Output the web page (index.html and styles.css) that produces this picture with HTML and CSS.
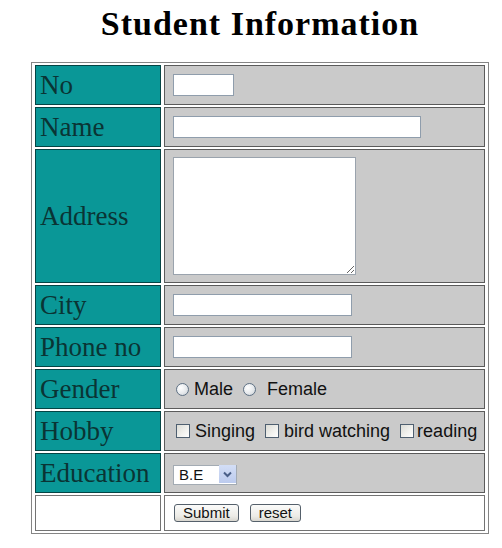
FILE: index.html
```html
<!DOCTYPE html>
<html>
<head>
<meta charset="utf-8">
<title>Student Information</title>
<link rel="stylesheet" href="styles.css">
</head>
<body>
<div class="page">
  <h1 class="title">Student Information</h1>
  <form class="form">
    <table class="info">
      <tr>
        <td class="label">No</td>
        <td class="field"><input class="txt txt-no" type="text"></td>
      </tr>
      <tr>
        <td class="label">Name</td>
        <td class="field"><input class="txt txt-name" type="text"></td>
      </tr>
      <tr class="row-address">
        <td class="label">Address</td>
        <td class="field field-address"><textarea class="area"></textarea></td>
      </tr>
      <tr>
        <td class="label">City</td>
        <td class="field"><input class="txt txt-mid" type="text"></td>
      </tr>
      <tr>
        <td class="label">Phone no</td>
        <td class="field"><input class="txt txt-mid" type="text"></td>
      </tr>
      <tr>
        <td class="label">Gender</td>
        <td class="field">
          <div class="opts">
            <input class="radio" type="radio" name="g"><span class="opt-text">Male</span>
            <input class="radio radio-2" type="radio" name="g"><span class="opt-text opt-spaced">Female</span>
          </div>
        </td>
      </tr>
      <tr>
        <td class="label">Hobby</td>
        <td class="field">
          <div class="opts">
            <input class="check" type="checkbox"><span class="opt-text">Singing</span>
            <input class="check check-n" type="checkbox"><span class="opt-text">bird watching</span>
            <input class="check check-n check-last" type="checkbox"><span class="opt-text opt-last">reading</span>
          </div>
        </td>
      </tr>
      <tr>
        <td class="label">Education</td>
        <td class="field">
          <span class="sel-wrap">
            <select class="sel"><option>B.E</option><option>B.Tech</option><option>M.E</option></select>
            <span class="sel-btn"><svg width="17" height="18" viewBox="0 0 17 18"><path d="M5 7.5 L8.5 11 L12 7.5" fill="none" stroke="#4a5f88" stroke-width="2"/></svg></span>
          </span>
        </td>
      </tr>
      <tr class="row-actions">
        <td class="blank"></td>
        <td class="blank actions">
          <button class="btn" type="submit">Submit</button><button class="btn btn-reset" type="reset">reset</button>
        </td>
      </tr>
    </table>
  </form>
</div>
</body>
</html>
```

FILE: styles.css
```css
html, body {
  margin: 0;
  padding: 0;
  background: #ffffff;
}

.page {
  width: 458px;
  margin-left: 31px;
}

.title {
  margin: 4px 0 0 0;
  height: 58px;
  text-align: center;
  font-family: "Liberation Serif", "Times New Roman", serif;
  font-weight: bold;
  font-size: 34px;
  letter-spacing: 1px;
  line-height: 40px;
  color: #000;
}

.form {
  margin: 0;
}

.info {
  width: 458px;
  table-layout: fixed;
  border-collapse: separate;
  border-spacing: 3px 2px;
  border: 1px solid #858585;
}

.info td {
  box-sizing: border-box;
  height: 40px;
  border: 1px solid rgba(0, 0, 0, 0.55);
  vertical-align: middle;
}

.label {
  width: 126px;
  background: #0a9797;
  color: #0a3434;
  font-family: "Liberation Serif", "Times New Roman", serif;
  font-size: 27px;
  padding: 0 0 0 4px;
  white-space: nowrap;
}

.field {
  width: 321px;
  background: #cacaca;
  padding: 0 0 0 8px;
  font-family: "Liberation Sans", Arial, sans-serif;
  font-size: 18px;
  color: #111;
}

.row-address td {
  height: 134px;
}

.txt {
  display: block;
  box-sizing: border-box;
  height: 22px;
  margin: 0;
  padding: 0 3px;
  border: 1px solid #8f9dac;
  background: #fff;
  font-family: "Liberation Sans", Arial, sans-serif;
  font-size: 14px;
  outline: none;
}

.txt-no { width: 61px; }
.txt-name { width: 248px; }
.txt-mid { width: 179px; }

.area {
  display: block;
  box-sizing: border-box;
  width: 183px;
  height: 118px;
  margin: 0;
  padding: 2px;
  border: 1px solid #9aa3ad;
  background: #fff;
  resize: both;
  outline: none;
}

.opts {
  display: flex;
  align-items: center;
  white-space: nowrap;
  line-height: 22px;
}

.radio,
.check {
  appearance: none;
  -webkit-appearance: none;
  box-sizing: border-box;
  width: 13px;
  height: 13px;
  margin: 0 5px 0 3px;
  flex: none;
}

.radio {
  border-radius: 50%;
  border: 1px solid #5f7184;
  background: radial-gradient(circle at 35% 35%, #ffffff 0%, #e6e9ec 55%, #c3c9cf 100%);
}

.check {
  width: 14px;
  height: 14px;
  border: 1px solid #4e5f70;
  background: linear-gradient(135deg, #dcdcd6 0%, #f2f2ef 60%, #ffffff 100%);
}

.radio-2 {
  margin-left: 10px;
  margin-right: 11px;
}

.check-n {
  margin-left: 10px;
  margin-right: 5px;
}

.check-last {
  margin-right: 3px;
}

.opt-text {
  display: inline-block;
}

.sel-wrap {
  position: relative;
  display: inline-block;
  width: 64px;
  height: 20px;
  vertical-align: middle;
}

.sel {
  appearance: none;
  -webkit-appearance: none;
  box-sizing: border-box;
  width: 64px;
  height: 20px;
  margin: 0;
  padding: 0 0 0 5px;
  border: 1px solid #a3abb3;
  border-radius: 0;
  background: #fff;
  font-family: "Liberation Sans", Arial, sans-serif;
  font-size: 15px;
  line-height: 18px;
  color: #111;
  outline: none;
}

.sel-btn {
  position: absolute;
  top: 1px;
  right: 1px;
  width: 17px;
  height: 18px;
  background: linear-gradient(180deg, #d3def6 0%, #bccbee 100%);
  pointer-events: none;
}

.sel-btn svg {
  display: block;
}

.blank {
  background: #ffffff;
}

.row-actions td {
  height: 36px;
}

.actions {
  padding: 0 0 2px 9px;
  white-space: nowrap;
}

.btn {
  box-sizing: border-box;
  height: 18px;
  margin: 0;
  padding: 0 8px;
  border: 1px solid #55606b;
  border-radius: 3px;
  background: linear-gradient(180deg, #fbfbfa 0%, #ecebe6 70%, #d8d6cf 100%);
  font-family: "Liberation Sans", Arial, sans-serif;
  font-size: 15px;
  line-height: 16px;
  color: #111;
  vertical-align: middle;
}

.btn-reset {
  margin-left: 11px;
}
```
